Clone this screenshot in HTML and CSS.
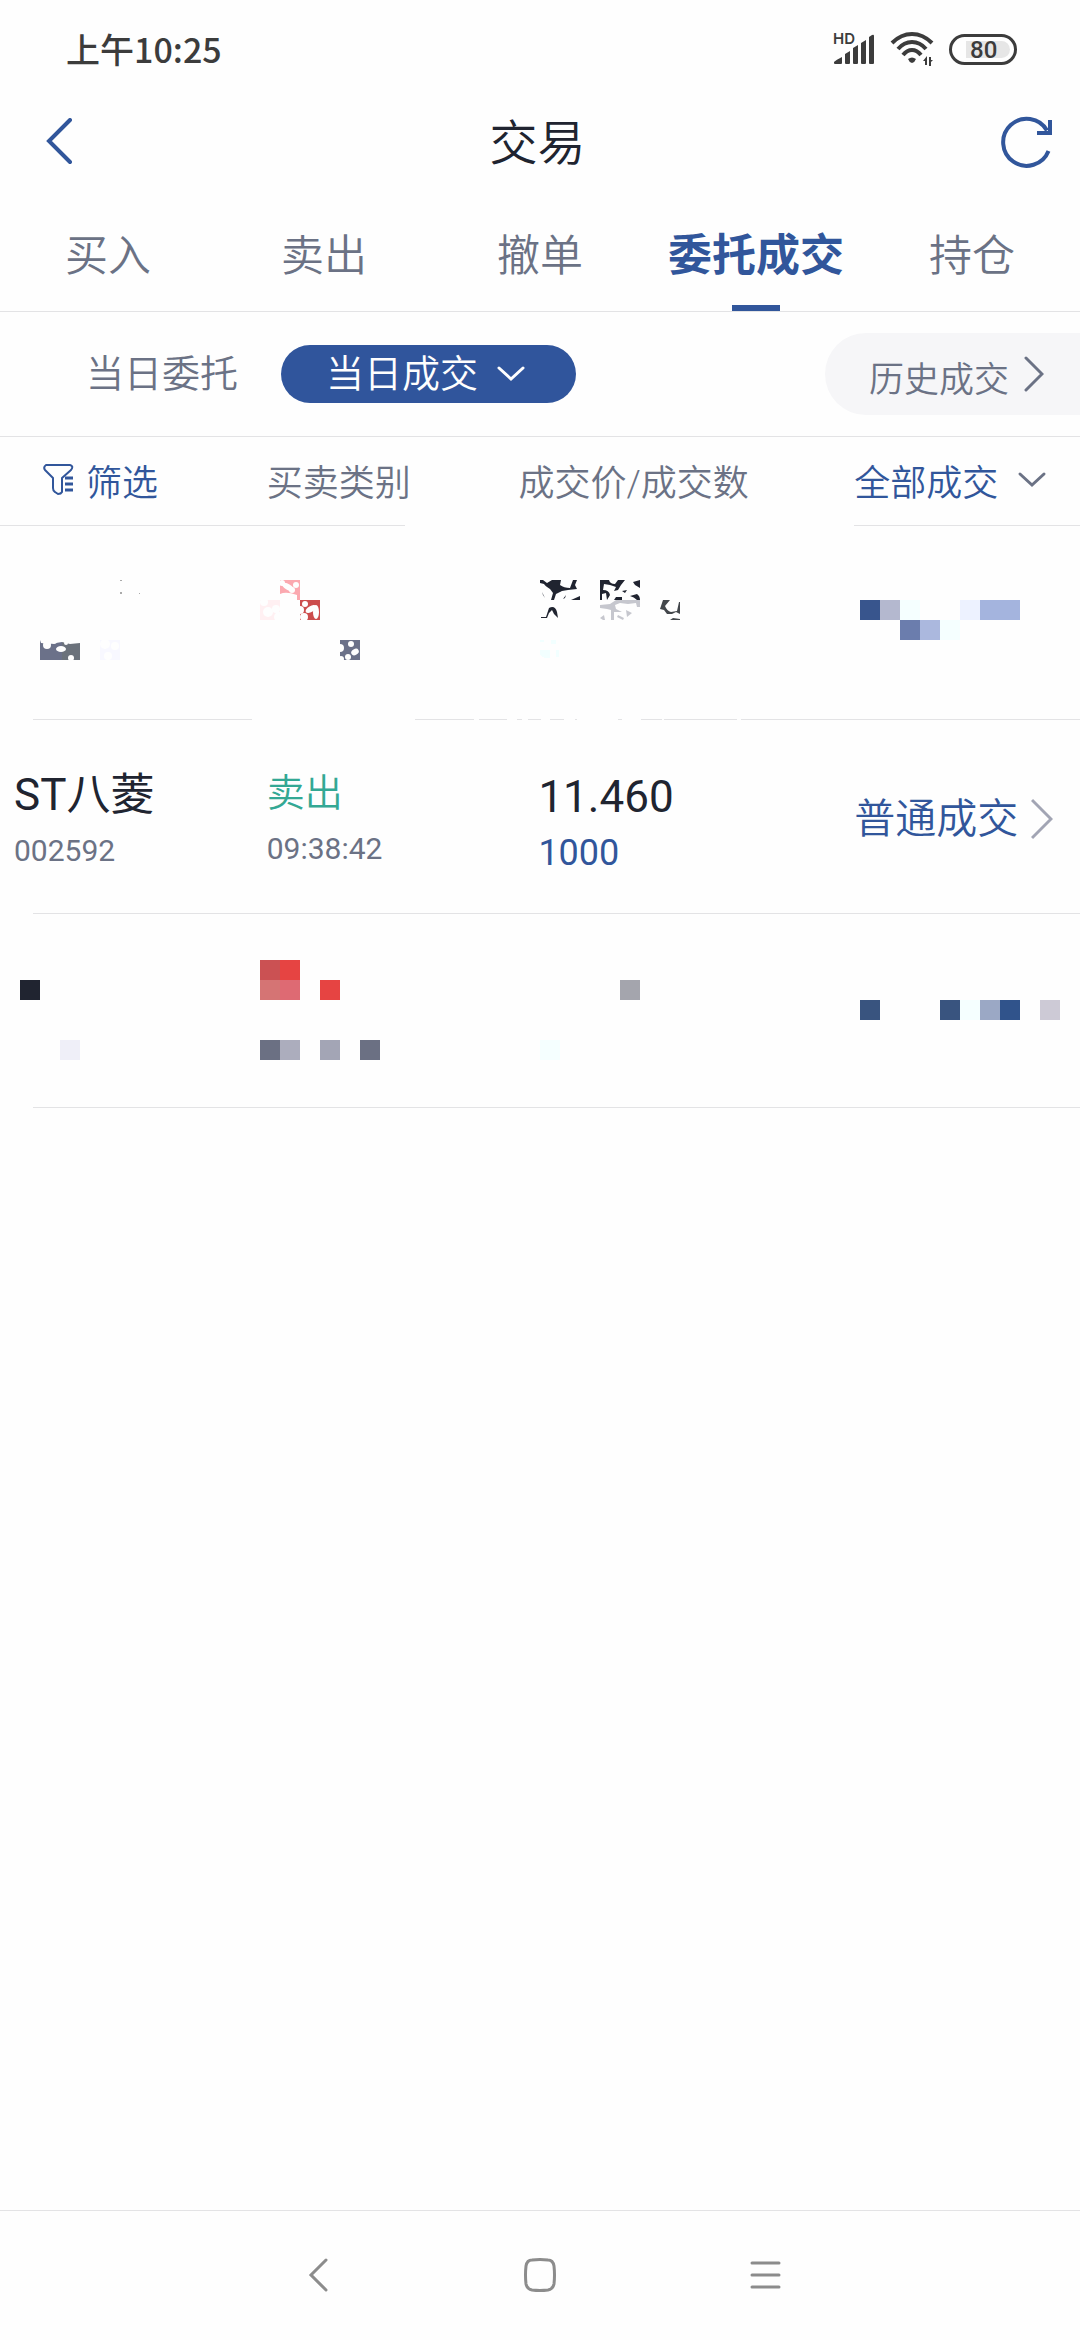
FILE: index.html
```html
<!DOCTYPE html>
<html lang="zh-CN">
<head>
<meta charset="utf-8">
<meta name="viewport" content="width=device-width, initial-scale=1">
<title>交易</title>
<link rel="stylesheet" href="styles.css">
</head>
<body>
<div class="status">
  <span class="status-time">上午10:25</span>
  <div class="status-icons">
    <div class="signal">
      <span class="signal-hd">HD</span>
      <svg width="42" height="32" viewBox="0 0 42 32" fill="#3c3c3c" aria-hidden="true">
        <path d="M1 29Q3 27 9 24V30Q9 31 8 31H2Q1 31 1 30ZM12 21L17 18V30Q17 31 16 31H13Q12 31 12 30ZM20 15L25 12V30Q25 31 24 31H21Q20 31 20 30ZM28 10L33 7V30Q33 31 32 31H29Q28 31 28 30ZM36 4L39 2Q41 1 41 3V30Q41 31 40 31H37Q36 31 36 30Z"/>
      </svg>
    </div>
    <svg width="44" height="36" viewBox="0 0 44 36" aria-hidden="true">
      <g fill="none" stroke="#3c3c3c" stroke-width="4">
        <path d="M2 12Q11 3 22 3T42 12"/>
        <path d="M8 18Q14 11 22 11T36 18"/>
        <path d="M13 24Q17 19 22 19T31 24"/>
      </g>
      <path d="M18 28Q22 25 26 28Q25 31 22 32Q19 31 18 28Z" fill="#3c3c3c"/>
      <path d="M37 25V34H35V30H33ZM39 35V26H41V29H43L41 31V35Z" fill="#3c3c3c"/>
    </svg>
    <div class="battery"><span class="battery-level">80</span></div>
  </div>
</div>

<header class="header">
  <button class="icon-button" type="button" aria-label="返回">
    <svg width="28" height="48" viewBox="0 0 28 48" fill="none" stroke="#31569b" stroke-width="4" stroke-linecap="round"><path d="M24 2L3 23L24 44"/></svg>
  </button>
  <h1 class="title">交易</h1>
  <button class="icon-button" type="button" aria-label="刷新">
    <svg width="52" height="52" viewBox="0 0 52 52" fill="none" stroke="#31569b" stroke-width="4"><path d="M47.500 35A23.500 23.500 0 1 1 46 14.500"/><path d="M49 4V17H36"/></svg>
  </button>
</header>

<nav class="tabs">
  <a class="tab" href="#buy">买入</a>
  <a class="tab" href="#sell">卖出</a>
  <a class="tab" href="#cancel">撤单</a>
  <a class="tab tab-active" href="#deals" aria-current="page">委托成交</a>
  <a class="tab" href="#holdings">持仓</a>
</nav>

<main class="content">
  <div class="switcher">
    <button class="switch" type="button">当日委托</button>
    <button class="switch switch-active" type="button" aria-haspopup="true">当日成交
      <svg width="30" height="18" viewBox="0 0 30 18" fill="none" stroke="#fefefe" stroke-width="3" stroke-linecap="round"><path d="M3 3L15 14L27 3"/></svg>
    </button>
    <button class="history" type="button">历史成交
      <svg width="20" height="40" viewBox="0 0 20 40" fill="none" stroke="#6b7285" stroke-width="3" stroke-linecap="round"><path d="M2 2L18 18L2 34"/></svg>
    </button>
  </div>

  <table class="deals">
    <colgroup><col class="col-name"><col class="col-side"><col class="col-price"><col class="col-type"></colgroup>
    <thead>
      <tr>
        <th class="head-filter">
          <button class="link-button" type="button">
            <svg width="31" height="33" viewBox="0 0 31 33" fill="none" stroke="#31569b" stroke-width="2" stroke-linejoin="round"><path d="M3 2H27Q31 3 28 7L19 15V29Q18 31 15 31L12 29Q10 28 10 25V15L2 7Q0 4 3 2Z"/><path d="M22 15H30M22 21H30M22 27H30" stroke-width="3"/></svg>
            筛选
          </button>
        </th>
        <th class="head-side">买卖类别</th>
        <th class="head-price">成交价/成交数</th>
        <th>
          <button class="link-button link-button-type" type="button" aria-haspopup="true">全部成交
            <svg width="30" height="18" viewBox="0 0 30 18" fill="none" stroke="#6b7285" stroke-width="3" stroke-linecap="round"><path d="M3 3L15 14L27 3"/></svg>
          </button>
        </th>
      </tr>
    </thead>
    <tbody>
      <tr>
        <td class="masked" colspan="4">
          <svg class="mosaic" viewBox="0 526 1080 194" shape-rendering="crispEdges" aria-hidden="true">
            <path d="M40 640H62V660H40Z" fill="#6b7189"/><path d="M62 640H80V660H62Z" fill="#6b727b"/>
            <path d="M100 640H120V660H100Z" fill="#f8f8ff"/>
            <path d="M120 580h2v1h-2zM120 592h2v2h-2zM139 593h1v1h-1z" fill="#aaa"/>
            <path d="M280 580H300V600H280Z" fill="#fba9b0"/>
            <path d="M260 600H280V620H260Z" fill="#fff0f2"/>
            <path d="M300 600H320V620H300Z" fill="#cc4d4d"/>
            <path d="M340 640H360V660H340Z" fill="#6b7189"/>
            <path d="M540 640h4v2h-4zM551 640h5v4h-5zM540 650h10v8h-5l-5-3zM556 650h3v7h-3z" fill="#f2ffff"/>
            <g shape-rendering="auto" fill="#fefefe">
              <path d="M40 640H80V643L70 644L62 642L50 644L41 643Z"/>
              <circle cx="47" cy="645" r="4"/><circle cx="54" cy="641" r="3"/><ellipse cx="61" cy="649" rx="5" ry="3"/><circle cx="66" cy="643" r="2"/><circle cx="71" cy="658" r="3"/>
              <circle cx="105" cy="644" r="5"/><circle cx="108" cy="656" r="4"/><circle cx="115" cy="646" r="4"/>
              <ellipse cx="288" cy="587" rx="7" ry="3" transform="rotate(30 288 587)"/><circle cx="282" cy="583" r="3"/><circle cx="296" cy="585" r="3"/><circle cx="292" cy="590" r="3"/>
              <path d="M280 594Q286 591 297 595V600H280Z"/>
              <circle cx="268" cy="612" r="5"/><circle cx="276" cy="609" r="4"/><circle cx="264" cy="602" r="4"/><circle cx="279" cy="617" r="5"/>
              <circle cx="305" cy="604" r="3"/><circle cx="300" cy="610" r="4"/><circle cx="304" cy="617" r="4"/><ellipse cx="311" cy="609" rx="6" ry="3" transform="rotate(-30 311 609)"/><ellipse cx="316" cy="612" rx="3" ry="7"/>
              <circle cx="340" cy="648" r="4"/><circle cx="351" cy="644" r="3"/><ellipse cx="355" cy="652" rx="4" ry="3" transform="rotate(-30 355 652)"/><circle cx="348" cy="657" r="3"/><circle cx="341" cy="659" r="3"/>
            </g>
            <g shape-rendering="auto" fill="#202430">
              <path d="M540 580H543L547 583L552 580H561L560 585Q564 588 570 588L573 580H577L575 585L577 589L568 590L562 591L556 594L554 600H551L553 593L550 589Q545 586 544 584L540 583Z"/>
              <path d="M571 600L580 596V600ZM563 599L566 595L565 598ZM541 617H546L549 608Q555 605 557 612L558 618L554 614L552 610L549 613L547 618H541ZM542 592L545 598L543 595Z"/>
              <path d="M600 580H609Q610 584 615 584L618 580L625 580L621 585L618 590L614 591L616 587L610 585L604 584L603 590Q609 590 610 595L607 600L606 593L602 594V600H600ZM633 582L640 580V588L635 585ZM622 591L627 590L625 593ZM614 600L616 597H622V600ZM630 596L637 594Q640 596 640 600H637Q634 597 630 596Z"/>
            </g>
            <g fill="#c6c7ce" shape-rendering="auto">
              <path d="M600 605L610 604L616 600H640V607H637L636 603L628 604L620 603L615 605L616 609L622 612L614 612L614 620H611V610L607 609L600 608Z"/>
              <path d="M600 618L604 615L605 620H603ZM618 615L624 618L623 620L617 617ZM626 610L632 613L627 617Z"/>
            </g>
            <path d="M663 600H670L665 606Q667 611 671 612L677 611L679 602L680 602V614L676 612L672 614H667L664 610L660 609ZM660 619L663 617M670 620L673 618L680 619V620Z" fill="#43474b" shape-rendering="auto"/>
            <path d="M860 600H880V620H860Z" fill="#38558d"/><path d="M880 600H900V620H880Z" fill="#b4b8cf"/><path d="M900 600H920V620H900ZM940 620H960V640H940Z" fill="#f5ffff"/>
            <path d="M960 600H980V620H960Z" fill="#edf2ff"/><path d="M980 600H1020V620H980Z" fill="#a4b4de"/><path d="M900 620H920V640H900Z" fill="#6b7dad"/><path d="M920 620H940V640H920Z" fill="#abb8de"/>
            <path d="M33 719H252V720H33ZM415 719H474V720H415ZM479 719H507V720H479ZM517 719H522V720H517ZM528 719H541V720H528ZM550 719H564V720H550ZM575 719H577V720H575ZM618 719H622V720H618ZM641 719H662V720H641ZM664 719H737V720H664ZM741 719H1080V720H741Z" fill="#e3e3e5"/>
          </svg>
        </td>
      </tr>
      <tr class="deal">
        <td class="cell-name"><div class="name">ST八菱</div><div class="minor">002592</div></td>
        <td><div class="side">卖出</div><div class="minor">09:38:42</div></td>
        <td class="cell-price"><div class="name">11.460</div><div class="amount">1000</div></td>
        <td class="cell-type">
          <a class="type-link" href="#detail">普通成交
            <svg width="22" height="42" viewBox="0 0 22 42" fill="none" stroke="#a2a5b4" stroke-width="3"><path d="M1 2L20 21L1 40"/></svg>
          </a>
        </td>
      </tr>
      <tr>
        <td class="masked" colspan="4">
          <svg class="mosaic" viewBox="0 914 1080 194" shape-rendering="crispEdges" aria-hidden="true">
            <path d="M20 980H40V1000H20Z" fill="#202430"/><path d="M60 1040H80V1060H60Z" fill="#efeff8"/>
            <path d="M260 960H280V980H260Z" fill="#cb5153"/><path d="M280 960H300V980H280ZM320 980H340V1000H320Z" fill="#e64442"/><path d="M260 980H280V1000H260Z" fill="#d57474"/><path d="M280 980H300V1000H280Z" fill="#de6a73"/>
            <path d="M260 1040H280V1060H260ZM360 1040H380V1060H360Z" fill="#6b7083"/><path d="M280 1040H300V1060H280Z" fill="#acadbd"/><path d="M320 1040H340V1060H320Z" fill="#a3a5b5"/>
            <path d="M620 980H640V1000H620Z" fill="#a4a5ad"/><path d="M540 1040H560V1060H540ZM960 1000H980V1020H960Z" fill="#f5ffff"/>
            <path d="M860 1000H880V1020H860ZM940 1000H960V1020H940Z" fill="#39547f"/><path d="M980 1000H1000V1020H980Z" fill="#9ba8c5"/><path d="M1000 1000H1020V1020H1000Z" fill="#30538b"/><path d="M1040 1000H1060V1020H1040Z" fill="#cdcad6"/>
            <path d="M33 1107H1080V1108H33Z" fill="#e3e3e5"/>
          </svg>
        </td>
      </tr>
    </tbody>
  </table>
</main>

<footer class="system">
  <button class="icon-button" type="button" aria-label="系统返回"><svg width="32" height="34" viewBox="0 0 32 34" fill="none" stroke="#8c8c8c" stroke-width="3" stroke-linecap="round"><path d="M27 2L12 17L27 32"/></svg></button>
  <button class="icon-button" type="button" aria-label="主屏幕"><svg width="32" height="34" viewBox="0 0 32 34" fill="none" stroke="#8c8c8c" stroke-width="3"><path d="M8 2Q16 1 24 2Q29 2 30 8Q31 17 30 26Q29 31 24 32Q16 33 8 32Q3 31 2 26Q1 17 2 8Q3 2 8 2Z"/></svg></button>
  <button class="icon-button" type="button" aria-label="最近任务"><svg width="32" height="34" viewBox="0 0 32 34" fill="none" stroke="#8c8c8c" stroke-width="3" stroke-linecap="round"><path d="M3 5H30M3 17H30M3 29H30"/></svg></button>
</footer>
</body>
</html>
```
FILE: styles.css
```css
* {
  box-sizing: border-box;
}

body {
  margin: 0;
  min-height: 100vh;
  display: flex;
  flex-direction: column;
  background: #fefefe;
  color: #202430;
  font-family: Roboto, "Noto Sans CJK SC", sans-serif;
}

button {
  padding: 0;
  border: 0;
  background: none;
  color: inherit;
  font: inherit;
}

a {
  color: inherit;
  text-decoration: none;
}

svg {
  display: block;
  flex: none;
}

/* Status bar */
.status {
  display: flex;
  align-items: center;
  justify-content: space-between;
  height: 76px;
  padding: 22px 63px 0 66px;
  color: #3c3c3c;
}

.status-time {
  font: 500 34px/50px "Noto Sans CJK SC", sans-serif;
}

.status-icons {
  display: flex;
  align-items: center;
  gap: 15px;
}

.signal {
  position: relative;
}

.signal-hd {
  position: absolute;
  left: 0;
  top: -2px;
  font: 600 15px/16px Inter, sans-serif;
}

.battery {
  display: flex;
  width: 68px;
  height: 31px;
  padding: 4px;
  border: 3px solid #3c3c3c;
  border-radius: 16px;
}

.battery-level {
  flex: 1;
  margin-left: 10px;
  padding-left: 4px;
  border-radius: 0 9px 9px 0;
  background: #e6e6e6;
  font-size: 24px;
  font-weight: 500;
  line-height: 18px;
}

/* Title bar */
.header {
  display: flex;
  align-items: center;
  justify-content: space-between;
  height: 132px;
  padding: 0 27px 0 46px;
}

.title {
  margin: 0;
  padding-top: 3px;
  font-size: 48px;
  font-weight: 350;
  line-height: 72px;
}

/* Main tabs */
.tabs {
  display: grid;
  grid-template-columns: repeat(5, 1fr);
  border-bottom: 1px solid #e3e3e5;
}

.tab {
  display: flex;
  flex-direction: column;
  align-items: center;
  color: #6b7285;
  font-size: 43px;
  font-weight: 350;
  line-height: 97px;
  white-space: nowrap;
}

.tab::after {
  content: "";
  width: 48px;
  height: 6px;
}

.tab-active {
  color: #31569b;
  font-size: 44px;
  font-weight: 700;
}

.tab-active::after {
  background: #31569b;
}

/* Order / deal switcher */
.switcher {
  display: flex;
  align-items: center;
  height: 125px;
  padding-left: 86px;
  border-bottom: 1px solid #e3e3e5;
  color: #6b7285;
  font-size: 38px;
  font-weight: 350;
}

.switch {
  line-height: 58px;
}

.switch-active {
  display: flex;
  align-items: center;
  gap: 18px;
  margin-left: 43px;
  padding: 0 50px 0 45px;
  border-radius: 29px;
  background: #30559c;
  color: #fefefe;
}

.history {
  display: flex;
  align-items: center;
  gap: 15px;
  height: 82px;
  margin-left: auto;
  padding: 4px 36px 0 44px;
  border-radius: 41px 0 0 41px;
  background: #f6f6f8;
  font-size: 35px;
}

/* Deals table */
.deals {
  width: 100%;
  table-layout: fixed;
  border-collapse: collapse;
}

.col-name { width: 24.7%; }
.col-side { width: 23.3%; }
.col-price { width: 31.1%; }

th,
td {
  padding: 0;
  text-align: left;
  font-weight: 400;
  background: linear-gradient(#e3e3e5, #e3e3e5) 0 100% / 100% 1px no-repeat;
}

th {
  height: 89px;
  padding-bottom: 4px;
  color: #6b7285;
  font-size: 36px;
  font-weight: 350;
  white-space: nowrap;
}

.head-filter {
  padding-left: 43px;
}

.head-side {
  background-size: 55% 1px;
}

.head-price,
.masked {
  background: none;
}

.link-button {
  display: flex;
  align-items: center;
  gap: 12px;
  color: #31569b;
}

.link-button-type {
  gap: 19px;
}

.mosaic {
  width: 100%;
  height: auto;
}

.deal td {
  height: 194px;
  vertical-align: middle;
  padding-top: 8px;
  line-height: 56px;
}

.deal .cell-name {
  padding-top: 12px;
  padding-left: 14px;
  background-position: 33px 100%;
}

.deal .cell-price {
  padding-top: 16px;
  padding-left: 20px;
}

.deal .cell-type {
  padding-top: 4px;
}

.name {
  font-size: 44px;
}

.side {
  color: #33a894;
  font-size: 38px;
  font-weight: 350;
}

.minor {
  color: #6b7285;
  font-size: 30px;
}

.amount {
  color: #31569b;
  font-size: 36px;
}

.type-link {
  display: flex;
  align-items: center;
  gap: 13px;
  color: #31569b;
  font-size: 41px;
  font-weight: 350;
}

/* System navigation */
.system {
  display: flex;
  justify-content: center;
  gap: 193px;
  margin-top: auto;
  padding: 47px 0 48px;
  border-top: 1px solid #e3e3e5;
}
```
